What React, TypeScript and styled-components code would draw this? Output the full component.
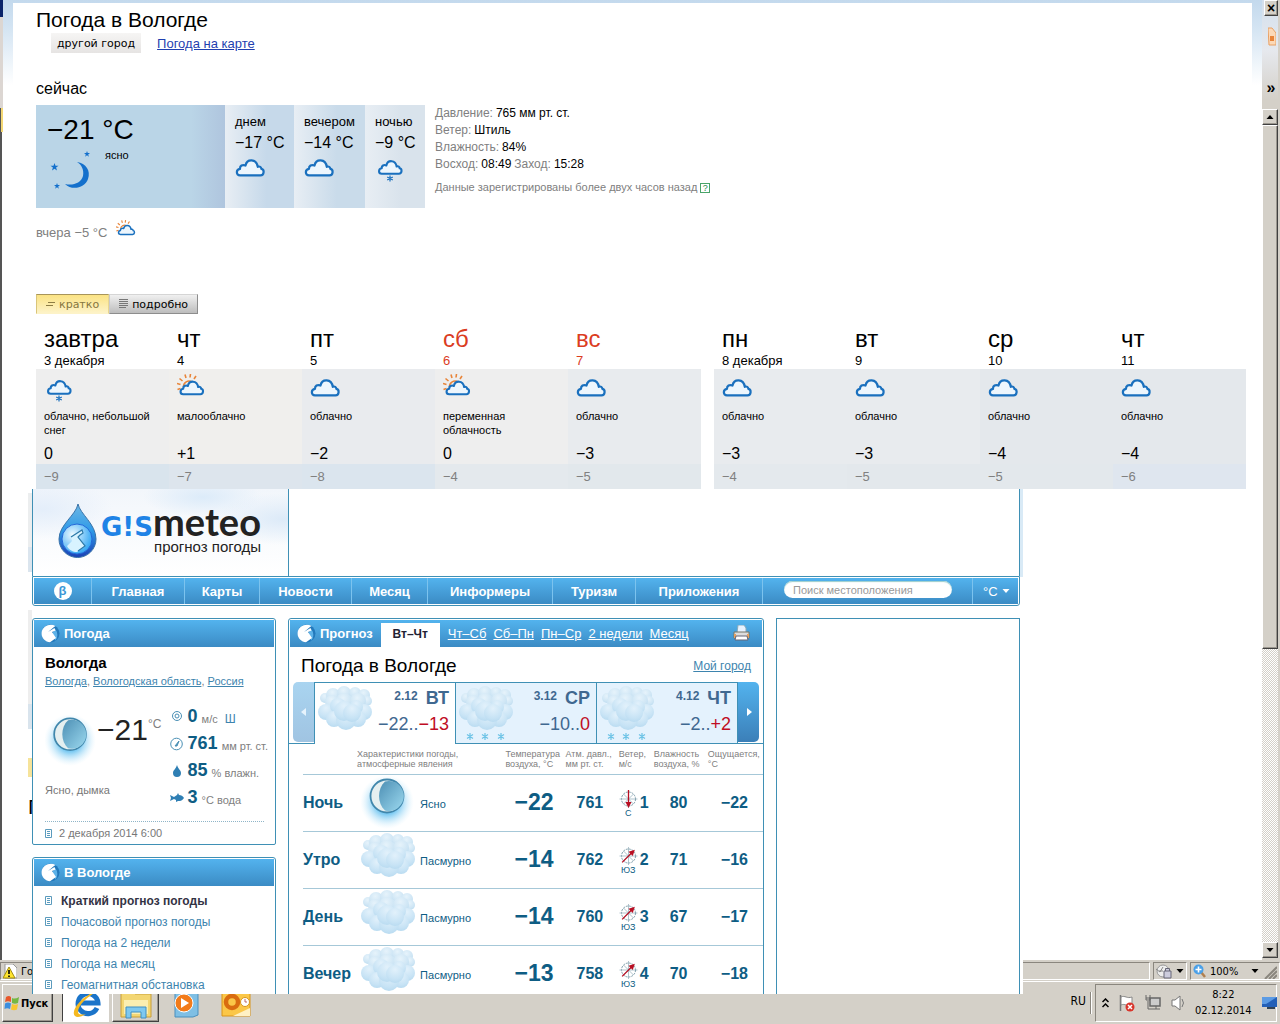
import React, { useId } from "react";
import styled, { createGlobalStyle, css } from "styled-components";

const GlobalStyle = createGlobalStyle`
  *, *::before, *::after { box-sizing: border-box; }
  html, body { margin: 0; padding: 0; }
  body {
    font-family: "Liberation Sans", Arial, sans-serif;
    font-size: 12px;
    color: #000;
    overflow: hidden;
  }
  h1, h2, h3, p, ul, dl, dd { margin: 0; padding: 0; font-weight: normal; }
  ul { list-style: none; }
  button, input, select { font-family: inherit; margin: 0; }
  button { cursor: pointer; }
  table { border-collapse: collapse; table-layout: fixed; width: 100%; }
  th, td { padding: 0; text-align: left; font-weight: normal; }
  svg { display: block; flex: none; }
`;

/* ---------- desktop shell ---------- */

const Desktop = styled.div`
  position: relative;
  height: 100vh;
  display: flex;
  flex-direction: column;
  overflow: hidden;
  background: #d4d0c8;
`;

const Backdrop = styled.div`
  position: absolute;
  inset: 0;
  display: flex;
  flex-direction: column;
`;

const Browser = styled.div`
  flex: 1;
  min-height: 0;
  display: flex;
  background: #fff;
`;

const LeftEdge = styled.div`
  width: 3px;
  display: flex;
  flex-direction: column;
`;

const EdgePart = styled.div<{ $h?: number; $bg: string }>`
  ${(p) => (p.$h ? `height: ${p.$h}px;` : "flex: 1;")}
  background: ${(p) => p.$bg};
`;

const Page = styled.div`
  flex: 1;
  background: linear-gradient(#c3d9ed 0, #d5e5f3 30px, #fff 85px);
`;

const ScrollColumn = styled.div`
  width: 18px;
  display: flex;
  flex-direction: column;
  background: #d4d0c8;
  padding-bottom: 2px;
  border-right: 2px solid #d4d0c8;
`;

const TopTools = styled.div`
  height: 109px;
  display: flex;
  flex-direction: column;
  align-items: flex-end;
  background: linear-gradient(#d3dfec, #e6e9ee 50px, #d4d0c8 100px);
`;

const raised = css`
  background: #d4d0c8;
  border: 1px solid;
  border-color: #fff #404040 #404040 #fff;
  box-shadow: inset -1px -1px 0 #9a968e;
`;

const CloseButton = styled.button`
  ${raised}
  width: 14px;
  height: 16px;
  padding: 0;
  font-size: 14px;
  line-height: 12px;
  font-weight: bold;
`;

const StarSlot = styled.span`
  height: 62px;
  width: 14px;
  padding: 10px 0 0 4px;
`;

const MoreButton = styled.button`
  height: 20px;
  width: 14px;
  border: 0;
  padding: 0;
  background: none;
  font-size: 16px;
  line-height: 16px;
  font-weight: bold;
`;

const ScrollButton = styled.button`
  ${raised}
  height: 16px;
  padding: 0;
  display: grid;
  place-items: center;
`;

const ScrollThumb = styled.div`
  ${raised}
  flex: 523 1 0;
`;

const ScrollTrack = styled.div`
  flex: 293 1 0;
  background: repeating-conic-gradient(#fff 0 25%, #d4d0c8 0 50%) 0 0 / 2px 2px;
`;

const StatusBar = styled.footer`
  height: 22px;
  display: flex;
  align-items: stretch;
  gap: 3px;
  padding: 2px 0 1px;
  background: #d4d0c8;
  border-bottom: 1px solid #fff;
`;

const StatusCell = styled.div<{ $w?: number }>`
  ${(p) => (p.$w ? `width: ${p.$w}px;` : "flex: 1;")}
  display: flex;
  align-items: center;
  gap: 4px;
  padding: 0 2px;
  border: 1px solid;
  border-color: #8a867e #fff #fff #8a867e;
  font-family: "DejaVu Sans Condensed", "DejaVu Sans", sans-serif;
  font-size: 11px;
`;

const StatusButton = styled.button`
  flex: 1;
  display: flex;
  align-items: center;
  justify-content: space-between;
  border: 0;
  padding: 0;
  background: none;
  font-family: "DejaVu Sans Condensed", "DejaVu Sans", sans-serif;
  font-size: 11px;
`;

const ZoomText = styled.span`
  flex: 1;
  text-align: left;
  padding-left: 4px;
`;

const Taskbar = styled.nav`
  height: 42px;
  display: flex;
  align-items: flex-start;
  padding: 2px 3px 0 2px;
  background: #d4d0c8;
`;

const StartButton = styled.button`
  ${raised}
  width: 51px;
  height: 38px;
  display: flex;
  align-items: center;
  gap: 1px;
  padding: 0 0 0 1px;
  margin-right: 9px;
  font-family: "DejaVu Sans Condensed", "DejaVu Sans", sans-serif;
  font-size: 11px;
  font-weight: bold;
`;

const TaskButton = styled.button<{ $look: "pressed" | "raised" | "flat" }>`
  width: 47px;
  height: 38px;
  margin-right: 3px;
  padding: 0;
  display: grid;
  place-items: center;
  ${(p) =>
    p.$look === "raised"
      ? raised
      : p.$look === "pressed"
      ? "background:#fff;border:1px solid;border-color:#404040 #fff #fff #404040;"
      : "background:none;border:0;"}
`;

const Tray = styled.div`
  margin-left: auto;
  display: flex;
  align-items: center;
  height: 38px;
`;

const Language = styled.span`
  font-family: "DejaVu Sans Condensed", "DejaVu Sans", sans-serif;
  font-size: 12px;
  padding: 0 4px 4px 0;
`;

const TrayBox = styled.div`
  height: 38px;
  width: 182px;
  margin-left: 3px;
  display: flex;
  align-items: center;
  gap: 10px;
  padding: 0 1px 0 6px;
  border: 1px solid;
  border-color: #8a867e #fff #fff #8a867e;
`;

const TrayDivider = styled.i`
  width: 2px;
  height: 22px;
  border-left: 1px solid #8a867e;
  border-right: 1px solid #fff;
`;

const Clock = styled.time`
  flex: 1;
  font-family: "DejaVu Sans Condensed", "DejaVu Sans", sans-serif;
  font-size: 11px;
  line-height: 16px;
  text-align: center;
  white-space: nowrap;
`;

/* ---------- Yandex panel ---------- */

const Forecast = styled.main`
  position: relative;
  margin: 3px 28px 0 13px;
  padding: 5px 6px 0 23px;
  background: #fff;
`;

const CityTitle = styled.h1`
  font-size: 21px;
  line-height: 24px;
`;

const CityLinks = styled.div`
  display: flex;
  align-items: center;
  gap: 16px;
  height: 20px;
  margin: 1px 0 26px 15px;
`;

const CityButton = styled.button`
  height: 20px;
  padding: 0 6px;
  border: 0;
  background: linear-gradient(#f6f5f4, #e6e4e3);
  font-family: "DejaVu Sans", Verdana, sans-serif;
  font-size: 11px;
`;

const MapLink = styled.a`
  font-size: 13px;
  color: #1f3fb0;
`;

const NowTitle = styled.h2`
  font-size: 16px;
  line-height: 20px;
  margin-bottom: 6px;
`;

const NowRow = styled.section`
  display: flex;
  height: 103px;
`;

const NowMain = styled.div`
  width: 189px;
  padding: 8px 11px;
  background: linear-gradient(90deg, #bad5e7 82%, #afc5de);
`;

const NowTemp = styled.p`
  font-size: 28px;
  line-height: 34px;
`;

const NowSky = styled.div`
  display: flex;
  gap: 13px;
  font-size: 11px;
  line-height: 16px;
`;

const DayPart = styled.div<{ $w: number; $to: string }>`
  width: ${(p) => p.$w}px;
  padding: 8px 10px;
  background: linear-gradient(90deg, #e8eef4, ${(p) => p.$to} 60%);
  white-space: nowrap;
`;

const PartName = styled.p`
  font-size: 13px;
  line-height: 18px;
`;

const PartTemp = styled.p`
  font-size: 16px;
  line-height: 23px;
`;

const Facts = styled.dl`
  padding-left: 10px;
  line-height: 17px;
  color: #000;
`;

const Fact = styled.div`
  display: flex;
  gap: 3px;
  dt { color: #808080; }
`;

const Note = styled.p`
  display: flex;
  align-items: center;
  gap: 3px;
  margin-top: 6px;
  font-size: 11px;
  color: #808080;
`;

const HelpLink = styled.a`
  width: 10px;
  height: 10px;
  border: 1px solid #4aa46a;
  color: #2b8a4d;
  font-size: 9px;
  line-height: 9px;
  text-align: center;
  text-decoration: none;
`;

const Yesterday = styled.p`
  display: flex;
  gap: 9px;
  height: 20px;
  margin: 12px 0 54px;
  font-size: 13px;
  line-height: 26px;
  color: #808080;
`;

const ViewSwitch = styled.div`
  display: flex;
  height: 20px;
`;

const ViewButton = styled.button<{ $on?: boolean }>`
  display: flex;
  align-items: center;
  gap: 4px;
  padding: 0 9px;
  font-family: "DejaVu Sans", Verdana, sans-serif;
  font-size: 11px;
  border: 1px solid;
  ${(p) =>
    p.$on
      ? "color:#857640;background:linear-gradient(#fbe384,#fdf3c8);border-color:#a8955a #e9d78f #fdf3c8 #d9c57a;"
      : "color:#000;background:linear-gradient(#f0f0f0,#bdbdbd);border-color:#d5d5d5 #8d8d8d #8d8d8d #c9c9c9;"}
`;

const Weeks = styled.div`
  display: grid;
  grid-template-columns: 5fr 4fr;
  gap: 13px;
  padding-top: 11px;
`;

const DayHead = styled.th<{ $holiday?: boolean }>`
  height: 44px;
  padding-left: 8px;
  vertical-align: top;
  color: ${(p) => (p.$holiday ? "#db3d1f" : "#000")};
`;

const DayName = styled.span`
  display: block;
  font-size: 24px;
  line-height: 28px;
`;

const DayDate = styled.span`
  display: block;
  font-size: 13px;
  line-height: 16px;
`;

const Sky = styled.td<{ $bg: string }>`
  height: 74px;
  padding: 5px 8px 0;
  vertical-align: top;
  background: ${(p) => p.$bg};
`;

const SkyText = styled.p`
  margin-top: 7px;
  font-size: 11px;
  line-height: 14px;
`;

const HighTemp = styled.td<{ $bg: string }>`
  height: 21px;
  padding-left: 8px;
  font-size: 16px;
  line-height: 21px;
  background: ${(p) => p.$bg};
`;

const LowTemp = styled.td<{ $bg: string }>`
  height: 25px;
  padding-left: 8px;
  font-size: 13px;
  color: #808080;
  background: ${(p) => p.$bg};
`;

/* ---------- Gismeteo panel ---------- */

const Gismeteo = styled.section`
  position: relative;
  flex: 1;
  min-height: 0;
  margin: 0 257px 30px 28px;
  display: flex;
  overflow: hidden;
`;

const Sliver = styled.div`
  width: 4px;
`;

const Body = styled.div`
  position: relative;
  flex: 1;
  min-width: 0;
  background: #fff;
`;

const RightSliver = styled.div`
  width: 3px;
  background: linear-gradient(#d9eaf6 88px, #fff 88px);
`;

const Masthead = styled.header`
  display: flex;
  height: 87px;
  border: solid #3f90b5;
  border-width: 0 1px;
`;

const LogoBox = styled.a`
  width: 256px;
  display: flex;
  gap: 2px;
  padding: 14px 0 0 25px;
  border-right: 1px solid #3f90b5;
  background:
    radial-gradient(ellipse 60px 20px at 170px 8px, #dcebf9, transparent),
    radial-gradient(ellipse 70px 26px at 250px 30px, #dceaf8, transparent),
    radial-gradient(ellipse 70px 30px at 10px 20px, #e4eefa, transparent),
    linear-gradient(#f2f6fb, #fff);
  color: #222;
  text-decoration: none;
`;

const LogoText = styled.span`
  display: block;
  width: 161px;
  text-align: right;
`;

const Wordmark = styled.span`
  display: block;
  height: 36px;
  font-family: Lato, "Open Sans", sans-serif;
  font-size: 38px;
  line-height: 36px;
  font-weight: bold;
  white-space: nowrap;
  b {
    font-family: "DejaVu Sans", Verdana, sans-serif;
    font-size: 26px;
    color: #1f83e6;
  }
`;

const Tagline = styled.span`
  display: block;
  font-size: 15px;
  line-height: 16px;
`;

const NavBar = styled.nav`
  display: flex;
  height: 30px;
  padding: 1px;
  border: 1px solid #3f90b5;
  border-radius: 0 0 3px 3px;
`;

const navPart = css`
  background: linear-gradient(#53b3ee, #3b8bc4);
  border-right: 1px solid #7cc3ee;
  color: #fff;
`;

const NavLink = styled.a<{ $w: number }>`
  ${navPart}
  flex: 0 0 ${(p) => p.$w}px;
  display: flex;
  align-items: center;
  justify-content: center;
  font-size: 13px;
  font-weight: bold;
  text-decoration: none;
`;

const Beta = styled.span`
  width: 18px;
  height: 18px;
  border-radius: 50%;
  background: #fff;
  color: #3b97d6;
  line-height: 17px;
  text-align: center;
`;

const SearchForm = styled.form`
  ${navPart}
  flex: 1;
  padding: 3px 20px 0 21px;
`;

const SearchInput = styled.input`
  display: block;
  width: 100%;
  height: 17px;
  padding: 0 9px;
  border: 0;
  border-radius: 9px;
  font-size: 11px;
  background: #fff;
  box-shadow: inset 0 1px 1px #9cc;
  &::placeholder { color: #999; opacity: 1; }
`;

const UnitBox = styled.label`
  ${navPart}
  flex: 0 0 45px;
  display: flex;
  align-items: center;
  gap: 3px;
  padding-left: 10px;
  border: 0;
`;

const UnitSelect = styled.select`
  appearance: none;
  width: 16px;
  padding: 0;
  border: 0;
  background: none;
  color: #fff;
  font-size: 13px;
`;

const Columns = styled.div`
  display: grid;
  grid-template-columns: 244px minmax(0, 1fr) 244px;
  gap: 12px;
  margin-top: 12px;
`;

const SideColumn = styled.div`
  display: flex;
  flex-direction: column;
  gap: 12px;
`;

const Card = styled.section`
  border: 1px solid #3f90b5;
  border-radius: 3px 3px 2px 2px;
  background: #fff;
`;

const AdCard = styled.aside`
  border: 1px solid #3f90b5;
`;

const CardHead = styled.header`
  display: flex;
  align-items: center;
  height: 27px;
  margin: 1px 1px 0;
  padding-left: 7px;
  background: linear-gradient(#53b3ee, #3b8bc4);
  color: #fff;
`;

const CardTitle = styled.h2`
  padding-left: 4px;
  font-size: 13px;
  font-weight: bold;
`;

const WeatherBody = styled.div`
  padding: 7px 7px 0 12px;
`;

const City = styled.h3`
  font-size: 15px;
  line-height: 18px;
  font-weight: bold;
`;

const blueLink = css`
  color: #3d84ae;
`;

const Crumbs = styled.p`
  font-size: 11px;
  line-height: 18px;
  color: #808080;
  white-space: nowrap;
  a { ${blueLink} }
`;

const Current = styled.div`
  display: flex;
  height: 118px;
  margin-top: 13px;
`;

const CurrentMain = styled.div`
  width: 124px;
`;

const CurrentTemp = styled.p`
  display: flex;
  height: 74px;
  font-size: 30px;
  line-height: 54px;
  color: #222;
  svg { margin-top: 12px; }
  sup { font-size: 12px; line-height: 42px; color: #808080; }
`;

const CurrentSky = styled.p`
  font-size: 11px;
  line-height: 26px;
  color: #777;
`;

const Readings = styled.ul`
  color: #808080;
  font-size: 11px;
  white-space: nowrap;
`;

const Reading = styled.li`
  display: flex;
  align-items: center;
  height: 27px;
  gap: 4px;
  b { font-size: 18px; color: #0e5d84; }
  svg { margin-left: 3px; }
  span { padding-top: 5px; }
  a { padding: 5px 0 0 3px; font-size: 12px; color: #3d84ae; text-decoration: none; }
`;

const Updated = styled.p`
  display: flex;
  align-items: center;
  gap: 7px;
  height: 23px;
  margin-right: 4px;
  border-top: 1px dotted #8fb5c8;
  font-size: 11px;
  color: #777;
`;

const LinkList = styled.ul`
  padding: 4px 12px;
`;

const LinkItem = styled.li`
  display: flex;
  align-items: center;
  gap: 9px;
  height: 21px;
  font-size: 12px;
  white-space: nowrap;
  a { ${blueLink} text-decoration: none; }
  b { color: #334; }
`;

const ActiveTab = styled.span`
  align-self: flex-end;
  height: 24px;
  width: 59px;
  margin: 0 8px;
  background: #fff;
  color: #223;
  font-size: 12px;
  line-height: 23px;
  font-weight: bold;
  text-align: center;
`;

const TabLinks = styled.div`
  flex: 1;
  display: flex;
  gap: 7px;
  font-size: 13px;
  white-space: nowrap;
  a { color: #fff; }
`;

const PrintButton = styled.button`
  border: 0;
  padding: 0 12px 2px 0;
  background: none;
`;

const TitleRow = styled.div`
  display: flex;
  align-items: center;
  justify-content: space-between;
  height: 35px;
  padding: 2px 12px 0 12px;
  a { ${blueLink} font-size: 12px; }
`;

const ForecastTitle = styled.h2`
  font-size: 19px;
`;

const DayTabs = styled.div`
  display: flex;
  height: 62px;
  padding: 0 4px;
  box-shadow: inset 0 -1px 0 #3f90b5;
`;

const Arrow = styled.button<{ $next?: boolean }>`
  width: 21px;
  height: 60px;
  padding: 0;
  border: 0;
  display: grid;
  place-items: center;
  border-radius: ${(p) => (p.$next ? "0 5px 5px 0" : "5px 0 0 5px")};
  background: ${(p) => (p.$next ? "linear-gradient(#53b3ee,#3b7fb8)" : "linear-gradient(#a9d4f0,#a0c4e2)")};
`;

const DayTab = styled.button<{ $on?: boolean }>`
  flex: 1;
  display: flex;
  justify-content: space-between;
  padding: 0 6px 0 3px;
  border: solid #3f90b5;
  border-width: 1px 1px ${(p) => (p.$on ? 0 : 1)}px ${(p) => (p.$on ? 1 : 0)}px;
  background: ${(p) => (p.$on ? "#fff" : "#e4f2fd")};
  text-align: right;
  color: #3f6890;
`;

const TabText = styled.span`
  display: block;
  margin-left: -4px;
  font-size: 18px;
  white-space: nowrap;
`;

const TabDate = styled.span`
  display: flex;
  justify-content: flex-end;
  gap: 8px;
  font-size: 12px;
  line-height: 26px;
  font-weight: bold;
  b { font-size: 18px; line-height: 30px; }
`;

const TabTemp = styled.span`
  display: block;
  line-height: 22px;
  em { font-style: normal; color: #c00d24; }
`;

const TableWrap = styled.div`
  padding-left: 14px;
`;

const HeadCell = styled.th<{ $w: number }>`
  width: ${(p) => p.$w}px;
  height: 30px;
  font-size: 9px;
  line-height: 10px;
  color: #808080;
  white-space: nowrap;
  border-bottom: 1px solid #a6c8d8;
`;

const Cell = styled.td<{ $pad?: number; $right?: boolean }>`
  height: 57px;
  padding-left: ${(p) => p.$pad ?? 0}px;
  font-size: ${(p) => (p.$right ? 23 : 16)}px;
  ${(p) => p.$right && "text-align: right; padding-right: 12px;"}
  font-weight: bold;
  color: #0e5d84;
  border-bottom: 1px solid #a6c8d8;
`;

const SkyCell = styled.div`
  display: flex;
  align-items: center;
  gap: 5px;
  padding-left: 4px;
  font-size: 11px;
  font-weight: normal;
  span { padding-top: 3px; }
`;

const WindCell = styled.div`
  display: grid;
  grid-template-columns: 19px auto;
  column-gap: 2px;
  align-items: center;
  small {
    grid-area: 2 / 1;
    font-size: 9px;
    line-height: 8px;
    font-weight: normal;
    text-align: center;
  }
`;

const WindSpeed = styled.span`
  grid-area: 1 / 2 / 3 / 3;
`;

/* ---------- drawings ---------- */

const cloudPath =
  "M5 16.300C.8 16.300.8 10.500 5 9.900 4.800 6.800 7.500 5.200 10.500 6.500 12-.500 21.500-.500 22.800 7.800 24.800 7 26.200 8 26.400 9.900 29.600 10.400 29.300 16.300 25.500 16.300z";

const Cloud = () => (
  <svg width="31" height="28" viewBox="0 -5 31 28" fill="#edf6fd" stroke="#1a70be" strokeWidth="2.200" strokeLinejoin="round">
    <path d={cloudPath} />
  </svg>
);

const SnowCloud = () => (
  <svg width="31" height="28" viewBox="0 0 31 28" fill="#edf6fd" stroke="#1a70be">
    <g transform="translate(2.500 6) scale(.84)">
      <path d={cloudPath} strokeWidth="2.500" strokeLinejoin="round" />
    </g>
    <path d="M15 21.500v6M12.200 23l5.600 3M17.800 23l-5.600 3" strokeWidth="1.200" />
  </svg>
);

const SunCloud = ({ size = 31 }: { size?: number }) => (
  <svg width={size} height={Math.round(size * 0.9)} viewBox="0 0 31 28" fill="none">
    <path
      d="M6.500 13a5.500 5.500 0 0 1 8.500-5M3.500 14.500l-3 1M3.500 10.500 0 9.500M5.500 7 2.500 4.500M9 4 8 .500M13 3.500l.500-3.500M17 5l2-3"
      stroke="#e8853a"
      strokeWidth="1.600"
    />
    <g transform="translate(2 6.500) scale(.84)">
      <path d={cloudPath} fill="#edf6fd" stroke="#1a70be" strokeWidth="2.500" strokeLinejoin="round" />
    </g>
  </svg>
);

const star = "M0-4 1-1.200 4-1.200 1.600.600 2.500 3.500 0 1.700-2.500 3.500-1.600.600-4-1.200-1-1.200z";

const NightSky = () => (
  <svg width="45" height="46" viewBox="0 -4 45 46" fill="#1470cc">
    <path d="M30 11c9 1 14 9 11 17-3 9-16 12-23 5 8 2 16-1 18-8 1-6-1-11-6-14z" />
    <path d={star} transform="translate(7.500 16)" />
    <path d={star} transform="translate(40 3) scale(.75)" />
    <path d={star} transform="translate(10 35) scale(.75)" />
  </svg>
);

const Drop = () => {
  const id = useId();
  return (
    <svg width="40" height="56" viewBox="0 0 40 56">
      <defs>
        <linearGradient id={id} x1="0" y1="0" x2="0" y2="1">
          <stop offset="0" stopColor="#6db7e4" />
          <stop offset=".5" stopColor="#2e9ae8" />
          <stop offset="1" stopColor="#1b3fb4" />
        </linearGradient>
        <radialGradient id={id + "b"} cx=".35" cy=".35" r=".65">
          <stop offset="0" stopColor="#eefaff" />
          <stop offset="1" stopColor="#3cabf4" />
        </radialGradient>
      </defs>
      <path d="M20 1c2 10 18 20 18 35a18.500 18.500 0 0 1-37 0C1 22 18 12 20 1z" fill={`url(#${id})`} stroke="#3973a8" />
      <circle cx="19" cy="36" r="15" fill={`url(#${id}b)`} stroke="#2468d8" />
      <path d="m13 34 11-7 1 3-3 2-2 2 7 9-8 6c-4 0-8-2-10-6l5-5z" fill="#d8f3ff" />
      <path d="m13 34 11-7 1 3-3 2-2 2 7 9-7 5" fill="none" stroke="#2c79a8" strokeWidth="1.200" />
    </svg>
  );
};

const Mark = () => (
  <svg width="19" height="19" viewBox="0 0 19 19">
    <circle cx="9.500" cy="9.500" r="9" fill="#2379bb" />
    <path d="M14 5a9 9 0 0 1 .5 11.500L11 10z" fill="#5db2e8" />
    <path d="M14.500 2C9-1 1.500 2 .6 8.500c-.6 5 3.400 9.500 8.400 9.800l6-4.300-4-6 3.500-1.500L13.500 4 7 8l6-5z" fill="#fff" />
  </svg>
);

const Sheet = () => (
  <svg width="7" height="9" viewBox="0 0 7 9" fill="none" stroke="#5b9bbd">
    <path d="M.5.5h6v8h-6zM2 2.500h3M2 4.500h3M2 6.500h3" />
  </svg>
);

const Moon = ({ size }: { size: number }) => {
  const id = useId();
  return (
    <svg width={size} height={size} viewBox="0 4 54 54">
      <defs>
        <radialGradient id={id}>
          <stop offset=".45" stopColor="#7ccaf2" />
          <stop offset="1" stopColor="#d9f1fd" stopOpacity="0" />
        </radialGradient>
        <linearGradient id={id + "m"} x1="0" y1="0" x2="1" y2="1">
          <stop offset="0" stopColor="#4d8fb4" />
          <stop offset="1" stopColor="#9cd9ef" />
        </linearGradient>
      </defs>
      <ellipse cx="26" cy="30" rx="27" ry="27" fill={`url(#${id})`} />
      <circle cx="26" cy="24" r="16.500" fill="#e5eff0" stroke="#4187ac" strokeWidth="1.800" />
      <path d="M24 9.500a15 15 0 1 1 0 29c-8-7-8-22 0-29z" fill={`url(#${id}m)`} />
    </svg>
  );
};

const backPuffs: [number, number, number][] = [
  [7, 12, 5], [15, 9, 7], [26, 7, 7], [37, 7, 6], [46, 9, 6], [49, 15, 5], [14, 16, 7], [26, 15, 8], [40, 15, 8],
];
const frontPuffs: [number, number, number][] = [
  [8, 26, 8], [46, 26, 8], [20, 20, 8], [38, 21, 7], [16, 33, 8], [40, 33, 8], [28, 34, 10], [26, 25, 10], [34, 27, 9],
];

const Puffs = ({ snow, tall }: { snow?: boolean; tall?: boolean }) => {
  const id = useId();
  const height = snow ? 57 : tall ? 50 : 54;
  const top = tall ? -3 : 0;
  return (
    <svg width="54" height={height} viewBox={`0 ${snow ? -3 : top} 54 ${height}`}>
      <defs>
        <radialGradient id={id + "a"} cx=".45" cy=".3" r=".8">
          <stop offset="0" stopColor="#e6f3fb" />
          <stop offset=".6" stopColor="#cfe6f5" />
          <stop offset="1" stopColor="#b9daef" />
        </radialGradient>
        <radialGradient id={id + "b"} cx=".5" cy=".25" r=".9">
          <stop offset="0" stopColor="#e2f1fb" />
          <stop offset=".6" stopColor="#c7e3f5" />
          <stop offset="1" stopColor="#b0d6ee" />
        </radialGradient>
      </defs>
      {backPuffs.map(([x, y, r]) => (
        <circle key={`${x}-${y}`} cx={x} cy={y} r={r} fill={`url(#${id}a)`} />
      ))}
      {frontPuffs.map(([x, y, r]) => (
        <circle key={`${x}-${y}`} cx={x} cy={y} r={r} fill={`url(#${id}b)`} />
      ))}
      {snow &&
        [11, 26, 42].map((x) => (
          <path key={x} d={`M${x} 47v7M${x - 3} 48.500l6 4M${x + 3} 48.500l-6 4`} stroke="#6cc3e6" strokeWidth="1.200" />
        ))}
    </svg>
  );
};

const Compass = ({ turn }: { turn: number }) => (
  <svg width="19" height="20" viewBox="-9.500 -10 19 20" fill="none">
    <circle r="7" stroke="#7a9aa8" strokeDasharray="2 1" />
    <path d="M-9 0H9M0-9V9M-5-5 5 5M5-5-5 5" stroke="#8eabb8" strokeWidth=".7" />
    <g transform={`rotate(${turn})`}>
      <path d="M0-9V5" stroke="#b80e22" strokeWidth="1.300" />
      <path d="M-3 3h6L0 9z" fill="#b80e22" />
    </g>
  </svg>
);

const readingIcons: Record<string, React.ReactNode> = {
  wind: <g fill="none" stroke="#4a90b5"><circle cx="7" cy="6" r="4.500" /><circle cx="7" cy="6" r="2" /></g>,
  gauge: <g fill="none" stroke="#4a90b5"><circle cx="6.500" cy="7" r="5.800" /><path d="m5 9 4-5-2 5z" fill="#4a90b5" /></g>,
  drop: <path d="M7 1c1 4 4 5 4 8a4 4 0 0 1-8 0c0-3 3-4 4-8z" fill="#2f7fb4" />,
  fish: <path d="m0 4 4 2 3-2 1-2 1 2c2 0 4 1 5 3-2 3-4 3-6 3l-2 1v-2L4 8 0 10l1-3z" fill="#2f7fb4" />,
};

const ReadingIcon = ({ name }: { name: string }) => (
  <svg width="14" height="14" viewBox="0 0 14 14">{readingIcons[name]}</svg>
);

const Triangle = ({ d, color = "#000" }: { d: string; color?: string }) => (
  <svg width="8" height="8" viewBox="0 0 8 8"><path d={d} fill={color} /></svg>
);
const DOWN = "M.5 2h7L4 6z";
const UP = "M.5 6h7L4 2z";

/* ---------- data ---------- */

type Day = { name: string; date: string; sky: string; icon: "snow" | "sun" | "cloud"; hi: string; lo: string; bg: string; night: string; holiday?: boolean };

const weekOne: Day[] = [
  { name: "завтра", date: "3 декабря", sky: "облачно, небольшой снег", icon: "snow", hi: "0", lo: "−9", bg: "#eeeeee", night: "#d9e4ed" },
  { name: "чт", date: "4", sky: "малооблачно", icon: "sun", hi: "+1", lo: "−7", bg: "#f0efed", night: "#dde5ed" },
  { name: "пт", date: "5", sky: "облачно", icon: "cloud", hi: "−2", lo: "−8", bg: "#e9ebee", night: "#dbe5ee" },
  { name: "сб", date: "6", sky: "переменная облачность", icon: "sun", hi: "0", lo: "−4", bg: "#eeeeee", night: "#e4e9ed", holiday: true },
  { name: "вс", date: "7", sky: "облачно", icon: "cloud", hi: "−3", lo: "−5", bg: "#e8ebee", night: "#e2e8ec", holiday: true },
];
const weekTwo: Day[] = [
  { name: "пн", date: "8 декабря", sky: "облачно", icon: "cloud", hi: "−3", lo: "−4", bg: "#e8ebee", night: "#e4e9ed" },
  { name: "вт", date: "9", sky: "облачно", icon: "cloud", hi: "−3", lo: "−5", bg: "#e8ebee", night: "#e3e8ec" },
  { name: "ср", date: "10", sky: "облачно", icon: "cloud", hi: "−4", lo: "−5", bg: "#e4e8ec", night: "#e3e8ec" },
  { name: "чт", date: "11", sky: "облачно", icon: "cloud", hi: "−4", lo: "−6", bg: "#e4e8ec", night: "#dfe6ef" },
];

const icons = { snow: <SnowCloud />, sun: <SunCloud />, cloud: <Cloud /> };

const WeekTable = ({ days }: { days: Day[] }) => (
  <table>
    <thead>
      <tr>
        {days.map((d) => (
          <DayHead key={d.date} scope="col" $holiday={d.holiday}>
            <DayName>{d.name}</DayName>
            <DayDate>{d.date}</DayDate>
          </DayHead>
        ))}
      </tr>
    </thead>
    <tbody>
      <tr>
        {days.map((d) => (
          <Sky key={d.date} $bg={d.bg}>
            {icons[d.icon]}
            <SkyText>{d.sky}</SkyText>
          </Sky>
        ))}
      </tr>
      <tr>{days.map((d) => <HighTemp key={d.date} $bg={d.bg}>{d.hi}</HighTemp>)}</tr>
      <tr>{days.map((d) => <LowTemp key={d.date} $bg={d.night}>{d.lo}</LowTemp>)}</tr>
    </tbody>
  </table>
);

const navItems: [string, number][] = [
  ["Главная", 93], ["Карты", 75], ["Новости", 92], ["Месяц", 76],
  ["Информеры", 125], ["Туризм", 83], ["Приложения", 127],
];

const hours = [
  { name: "Ночь", sky: "Ясно", t: "−22", p: "761", dir: "С", turn: 0, wind: "1", hum: "80", feels: "−22" },
  { name: "Утро", sky: "Пасмурно", t: "−14", p: "762", dir: "ЮЗ", turn: -135, wind: "2", hum: "71", feels: "−16" },
  { name: "День", sky: "Пасмурно", t: "−14", p: "760", dir: "ЮЗ", turn: -135, wind: "3", hum: "67", feels: "−17" },
  { name: "Вечер", sky: "Пасмурно", t: "−13", p: "758", dir: "ЮЗ", turn: -135, wind: "4", hum: "70", feels: "−18" },
];

/* ---------- sections ---------- */

const Shell = () => (
  <Backdrop>
    <Browser>
      <LeftEdge>
        <EdgePart $h={17} $bg="#0a246a" />
        <EdgePart $h={91} $bg="#dcd6d2" />
        <EdgePart $h={24} $bg="linear-gradient(90deg,#555 1px,#f3d774 1px)" />
        <EdgePart $bg="linear-gradient(90deg,#555 2px,#fff 2px)" />
      </LeftEdge>
      <Page />
      <ScrollColumn>
        <TopTools>
          <CloseButton aria-label="Закрыть">×</CloseButton>
          <StarSlot>
            <svg width="8" height="20" viewBox="0 0 8 20"><path d="M0 2h4l4 5v12H1z" fill="#fbd9b8" stroke="#e9a063" /><path d="M2 10h4v5H2z" fill="#e8843a" /></svg>
          </StarSlot>
          <MoreButton>»</MoreButton>
        </TopTools>
        <ScrollButton aria-label="Вверх"><Triangle d={UP} /></ScrollButton>
        <ScrollThumb />
        <ScrollTrack />
        <ScrollButton aria-label="Вниз"><Triangle d={DOWN} /></ScrollButton>
      </ScrollColumn>
    </Browser>
    <StatusBar>
      <StatusCell>
        <svg width="14" height="15" viewBox="0 0 14 15"><path d="M2 0h8l4 4v10H2z" fill="#fff" stroke="#999" /><path d="M6 3l6 11H0z" fill="#ffe52e" stroke="#a08a10" /><path d="M6 6v4M6 11.500V13" stroke="#000" strokeWidth="1.600" /></svg>
        Го
      </StatusCell>
      <StatusCell $w={34}>
        <StatusButton aria-label="Защита">
          <svg width="16" height="15" viewBox="0 0 16 15"><circle cx="7" cy="7" r="6" fill="#eee" stroke="#999" /><path d="m0 5 4 3 3-5M7 7H3" stroke="#888" fill="none" /><path d="M8 7h7v7H8zM9.500 7V4.500h4V7" fill="#ccd" stroke="#667" /></svg>
          <Triangle d={DOWN} />
        </StatusButton>
      </StatusCell>
      <StatusCell $w={90}>
        <StatusButton>
          <svg width="13" height="14" viewBox="0 0 13 14"><path d="m8 8 4 5" stroke="#b08050" strokeWidth="2.500" /><circle cx="5.500" cy="5.500" r="5" fill="#4aa0e8" /><path d="M5.500 2.500v6M2.500 5.500h6" stroke="#fff" strokeWidth="1.600" /></svg>
          <ZoomText>100%</ZoomText>
          <Triangle d={DOWN} />
          <svg width="18" height="16" viewBox="0 0 18 16" stroke="#8a867e" strokeWidth="2"><path d="M6 16 18 4M10 16l8-8M14 16l4-4" /></svg>
        </StatusButton>
      </StatusCell>
    </StatusBar>
    <Taskbar>
      <StartButton>
        <svg width="16" height="16" viewBox="0 0 16 16"><path d="M2 2q3-2 5 0v5q-3-1.500-6 0z" fill="#e8572a" /><path d="M8 3q3 1.500 7-1l-1 6q-3 1.500-6 0z" fill="#74b843" /><path d="M1 8.500q3-2 6 0L6 14q-3-1.500-5.500 0z" fill="#3c8ede" /><path d="M8 9q3 1.500 6 0l-1 5.500q-3 1.500-6 0z" fill="#f8c62f" /></svg>
        Пуск
      </StartButton>
      <TaskButton $look="pressed" aria-label="Internet Explorer">
        <svg width="32" height="32" viewBox="0 0 32 32" fill="none"><path d="M27 21a10 10 0 1 1 1-5H10" stroke="#1b74c9" strokeWidth="5" /><path d="M5 29C0 24 12 8 28 4c-10 5-20 14-20 21 0 3 4 3 8 2-5 3-9 4-11 2z" fill="#f5b921" /></svg>
      </TaskButton>
      <TaskButton $look="raised" aria-label="Проводник">
        <svg width="32" height="32" viewBox="0 0 32 32"><path d="M1 4h12l2 3h16v23H1z" fill="#f3d673" stroke="#c79e38" /><path d="M4 13h24v14H4z" fill="#fbeeb0" /><path d="M6 31V20h20v11h-5v-6H11v6z" fill="#7ec8ef" stroke="#3f8fc4" /></svg>
      </TaskButton>
      <TaskButton $look="flat" aria-label="Проигрыватель">
        <svg width="28" height="30" viewBox="0 0 28 30"><path d="M3 1h18l5 3v23l-5 2H3z" fill="#7fbfe4" stroke="#4a8fbd" /><circle cx="12" cy="15" r="9" fill="#f27b1a" stroke="#fff" /><path d="m9 10 8 5-8 5z" fill="#fff" /></svg>
      </TaskButton>
      <TaskButton $look="flat" aria-label="Outlook">
        <svg width="30" height="30" viewBox="0 0 30 30"><path d="M1 3h28v25H1z" fill="#fbc748" stroke="#d8941b" /><path d="m12 28 17-8v8z" fill="#fff1c4" /><circle cx="11" cy="14" r="6" fill="none" stroke="#d96c10" strokeWidth="4.500" /><circle cx="24" cy="14" r="4.500" fill="#fff" stroke="#d8941b" /><path d="M24 11v3h2" stroke="#b66" fill="none" /></svg>
      </TaskButton>
      <Tray>
        <Language>RU</Language>
        <TrayDivider />
        <TrayBox>
          <svg width="7" height="10" viewBox="0 0 7 10" fill="none" stroke="#000" strokeWidth="1.500"><path d="m.5 4 3-3 3 3M.5 9l3-3 3 3" /></svg>
          <svg width="16" height="17" viewBox="0 0 16 17"><path d="M1.500 0v16" stroke="#777" strokeWidth="1.500" /><path d="M2 2c4-2 6 2 11 0v8c-5 2-7-2-11 0z" fill="#fff" stroke="#888" /><circle cx="11" cy="12" r="4.500" fill="#d9342b" /><path d="m9 10 4 4M13 10l-4 4" stroke="#fff" strokeWidth="1.500" /></svg>
          <svg width="16" height="16" viewBox="0 0 16 16" fill="none" stroke="#666"><path d="M5 3h10v8H5z" fill="#ccc" strokeWidth="1.500" /><path d="M7 14h8M11 11v3M3 6v8h4M1 0v3h4V0M1 3v2h4V3" /></svg>
          <svg width="14" height="16" viewBox="0 0 14 16" fill="#fff" stroke="#777"><path d="M1 5h3l5-4v14l-5-4H1z" /><path d="M11 4q3 4 0 8" fill="none" /></svg>
          <Clock>8:22<br />02.12.2014</Clock>
          <svg width="15" height="12" viewBox="0 0 15 12"><path d="M0 0h15v10H0z" fill="#2360b8" /><path d="M0 0h15L4 7H0z" fill="#5c9be4" /><path d="M5 11h8" stroke="#345" strokeWidth="2" /></svg>
        </TrayBox>
      </Tray>
    </Taskbar>
  </Backdrop>
);

const SliverPart = styled.div<{ $gap: number; $h: number; $bg: string }>`
  margin-top: ${(p) => p.$gap}px;
  height: ${(p) => p.$h}px;
  background: ${(p) => p.$bg};
  font-size: 21px;
  line-height: 24px;
`;

const Switch = () => (
  <ViewSwitch>
    <ViewButton $on>
      <svg width="9" height="6" viewBox="0 0 9 6" stroke="#8d7d45"><path d="M2 1.500h7M0 4.500h7" /></svg>
      кратко
    </ViewButton>
    <ViewButton>
      <svg width="9" height="10" viewBox="0 0 9 10" stroke="#777"><path d="M0 .5h9M0 2.500h9M0 4.500h9M0 6.500h9M0 8.500h7" /></svg>
      подробно
    </ViewButton>
  </ViewSwitch>
);

const YandexForecast = () => (
  <Forecast>
    <CityTitle>Погода в Вологде</CityTitle>
    <CityLinks>
      <CityButton>другой город</CityButton>
      <MapLink href="#map">Погода на карте</MapLink>
    </CityLinks>
    <NowTitle>сейчас</NowTitle>
    <NowRow>
      <NowMain>
        <NowTemp>−21 °C</NowTemp>
        <NowSky><NightSky />ясно</NowSky>
      </NowMain>
      <DayPart $w={69} $to="#c6d9ea"><PartName>днем</PartName><PartTemp>−17 °C</PartTemp><Cloud /></DayPart>
      <DayPart $w={71} $to="#c9dbea"><PartName>вечером</PartName><PartTemp>−14 °C</PartTemp><Cloud /></DayPart>
      <DayPart $w={60} $to="#d9e3ec"><PartName>ночью</PartName><PartTemp>−9 °C</PartTemp><SnowCloud /></DayPart>
      <Facts>
        <Fact><dt>Давление:</dt><dd>765 мм рт. ст.</dd></Fact>
        <Fact><dt>Ветер:</dt><dd>Штиль</dd></Fact>
        <Fact><dt>Влажность:</dt><dd>84%</dd></Fact>
        <Fact><dt>Восход:</dt><dd>08:49</dd><dt>Заход:</dt><dd>15:28</dd></Fact>
        <Note>Данные зарегистрированы более двух часов назад <HelpLink href="#help">?</HelpLink></Note>
      </Facts>
    </NowRow>
    <Yesterday>вчера −5 °C <SunCloud size={22} /></Yesterday>
    <Switch />
    <Weeks>
      <WeekTable days={weekOne} />
      <WeekTable days={weekTwo} />
    </Weeks>
  </Forecast>
);

const CityCard = () => (
  <Card>
    <CardHead><Mark /><CardTitle>Погода</CardTitle></CardHead>
    <WeatherBody>
      <City>Вологда</City>
      <Crumbs><a href="#city">Вологда</a>, <a href="#region">Вологодская область</a>, <a href="#country">Россия</a></Crumbs>
      <Current>
        <CurrentMain>
          <CurrentTemp><Moon size={52} />−21<sup>°C</sup></CurrentTemp>
          <CurrentSky>Ясно, дымка</CurrentSky>
        </CurrentMain>
        <Readings>
          <Reading><ReadingIcon name="wind" /><b>0</b><span>м/с</span><a href="#wind">Ш</a></Reading>
          <Reading><ReadingIcon name="gauge" /><b>761</b><span>мм рт. ст.</span></Reading>
          <Reading><ReadingIcon name="drop" /><b>85</b><span>% влажн.</span></Reading>
          <Reading><ReadingIcon name="fish" /><b>3</b><span>°C вода</span></Reading>
        </Readings>
      </Current>
      <Updated><Sheet />2 декабря 2014 6:00</Updated>
    </WeatherBody>
  </Card>
);

const DayChoice = ({ date, day, from, to, on }: { date: string; day: string; from: string; to: string; on?: boolean }) => (
  <DayTab $on={on}>
    <Puffs snow={!on} tall />
    <TabText>
      <TabDate>{date}<b>{day}</b></TabDate>
      <TabTemp>{from}..<em>{to}</em></TabTemp>
    </TabText>
  </DayTab>
);

const ForecastCard = () => (
  <Card>
    <CardHead>
      <Mark /><CardTitle>Прогноз</CardTitle>
      <ActiveTab>Вт–Чт</ActiveTab>
      <TabLinks>
        {["Чт–Сб", "Сб–Пн", "Пн–Ср", "2 недели", "Месяц"].map((t) => <a key={t} href="#period">{t}</a>)}
      </TabLinks>
      <PrintButton aria-label="Печать">
        <svg width="17" height="16" viewBox="0 0 17 16"><path d="M5 0h6l2 3v5H4z" fill="#e7f2ff" stroke="#8ab" /><path d="M1 7h15v6H1z" fill="#ddd" stroke="#776" /><path d="M1 9h2v4H1zM14 9h2v4h-2z" fill="#e8a05c" /><path d="M3 11h11l1 4H2z" fill="#fff" stroke="#667" /></svg>
      </PrintButton>
    </CardHead>
    <TitleRow>
      <ForecastTitle>Погода в Вологде</ForecastTitle>
      <a href="#mycity">Мой город</a>
    </TitleRow>
    <DayTabs>
      <Arrow aria-label="Назад"><Triangle d="M6 0v8L1 4z" color="#e6f3fc" /></Arrow>
      <DayChoice on date="2.12" day="ВТ" from="−22" to="−13" />
      <DayChoice date="3.12" day="СР" from="−10" to="0" />
      <DayChoice date="4.12" day="ЧТ" from="−2" to="+2" />
      <Arrow $next aria-label="Вперёд"><Triangle d="M2 0v8l5-4z" color="#fff" /></Arrow>
    </DayTabs>
    <TableWrap>
      <table>
        <thead>
          <tr>
            <HeadCell $w={54} aria-label="Время суток" />
            <HeadCell $w={148}>Характеристики погоды,<br />атмосферные явления</HeadCell>
            <HeadCell $w={60}>Температура<br />воздуха, °C</HeadCell>
            <HeadCell $w={53}>Атм. давл.,<br />мм рт. ст.</HeadCell>
            <HeadCell $w={35}>Ветер,<br />м/с</HeadCell>
            <HeadCell $w={54}>Влажность<br />воздуха, %</HeadCell>
            <HeadCell $w={55}>Ощущается,<br />°C</HeadCell>
          </tr>
        </thead>
        <tbody>
          {hours.map((h) => (
            <tr key={h.name}>
              <Cell>{h.name}</Cell>
              <Cell><SkyCell>{h.sky === "Ясно" ? <Moon size={54} /> : <Puffs />}<span>{h.sky}</span></SkyCell></Cell>
              <Cell $right>{h.t}</Cell>
              <Cell $pad={11}>{h.p}</Cell>
              <Cell><WindCell><Compass turn={h.turn} /><WindSpeed>{h.wind}</WindSpeed><small>{h.dir}</small></WindCell></Cell>
              <Cell $pad={16}>{h.hum}</Cell>
              <Cell $pad={13}>{h.feels}</Cell>
            </tr>
          ))}
        </tbody>
      </table>
    </TableWrap>
  </Card>
);

const GismeteoPage = () => (
  <Gismeteo>
    <Sliver>
      <SliverPart $gap={4} $h={79} $bg="linear-gradient(#eceeef 54px,#dbe5ee 54px)" />
      <SliverPart $gap={38} $h={94} $bg="#eeeeee" />
      <SliverPart $gap={0} $h={25} $bg="#d9e4ed" />
      <SliverPart $gap={29} $h={19} $bg="#f6e39a" />
      <SliverPart $gap={18} $h={24} $bg="#fff">П</SliverPart>
    </Sliver>
    <Body>
      <Masthead>
        <LogoBox href="#home">
          <Drop />
          <LogoText>
            <Wordmark><b>G!S</b>meteo</Wordmark>
            <Tagline>прогноз погоды</Tagline>
          </LogoText>
        </LogoBox>
      </Masthead>
      <NavBar>
        <NavLink $w={58} href="#beta"><Beta>β</Beta></NavLink>
        {navItems.map(([t, w]) => <NavLink key={t} $w={w} href="#section">{t}</NavLink>)}
        <SearchForm><SearchInput aria-label="Поиск местоположения" placeholder="Поиск местоположения" /></SearchForm>
        <UnitBox>
          <UnitSelect aria-label="Единицы"><option>°C</option></UnitSelect>
          <Triangle d={DOWN} color="#fff" />
        </UnitBox>
      </NavBar>
      <Columns>
        <SideColumn>
          <CityCard />
          <Card>
            <CardHead><Mark /><CardTitle>В Вологде</CardTitle></CardHead>
            <LinkList>
              <LinkItem><Sheet /><b>Краткий прогноз погоды</b></LinkItem>
              {["Почасовой прогноз погоды", "Погода на 2 недели", "Погода на месяц", "Геомагнитная обстановка"].map((t) => (
                <LinkItem key={t}><Sheet /><a href="#more">{t}</a></LinkItem>
              ))}
            </LinkList>
          </Card>
        </SideColumn>
        <ForecastCard />
        <AdCard />
      </Columns>
    </Body>
    <RightSliver />
  </Gismeteo>
);

export default function App() {
  return (
    <Desktop>
      <GlobalStyle />
      <Shell />
      <YandexForecast />
      <GismeteoPage />
    </Desktop>
  );
}
